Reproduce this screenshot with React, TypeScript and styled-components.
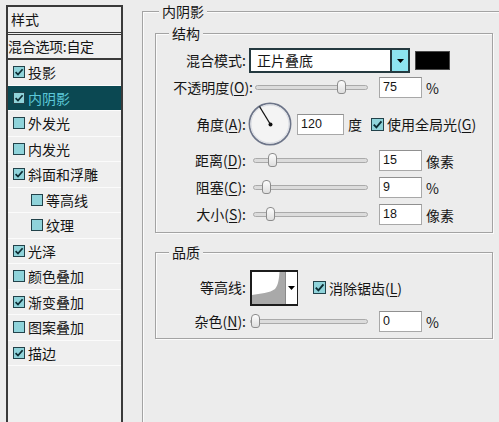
import React from "react";
import styled, { createGlobalStyle } from "styled-components";

const Global = createGlobalStyle`
  html, body { margin: 0; padding: 0; background: #ececec; overflow: hidden; }
  body {
    font-family: "Noto Sans CJK SC", "Noto Sans", sans-serif;
    font-size: 14px;
    color: #151515;
  }
  u { text-underline-offset: 2px; }
`;

const Page = styled.div`
  display: flex;
  align-items: stretch;
  width: 499px;
  height: 422px;
  overflow: hidden;
`;

const Sidebar = styled.div`
  flex: none;
  box-sizing: border-box;
  width: 117px;
  margin: 5px 0 0 6px;
  border: 2px solid #3a3a3a;
  border-bottom: none;
  background: #efefef;
  display: flex;
  flex-direction: column;
`;

const SideHeader = styled.div`
  height: 25px;
  line-height: 25px;
  padding-left: 3px;
  border-bottom: 3px double #3a3a3a;
`;

const BlendRow = styled.div`
  height: 23px;
  line-height: 23px;
  padding-left: 0;
  border-bottom: 2px solid #3a3a3a;
  white-space: nowrap;
  letter-spacing: -0.3px;
`;

const Item = styled.div<{ $indent?: boolean; $selected?: boolean }>`
  display: flex;
  align-items: center;
  gap: 3px;
  height: 24.5px;
  padding-left: ${(p) => (p.$indent ? 23 : 5)}px;
  border-bottom: 1px solid #fbfbfb;
  background: ${(p) => (p.$selected ? "#0b4852" : "transparent")};
  color: ${(p) => (p.$selected ? "#5cc8d8" : "#151515")};
  white-space: nowrap;
`;

const Box = styled.span<{ $size?: number }>`
  flex: none;
  box-sizing: border-box;
  width: ${(p) => p.$size ?? 12}px;
  height: ${(p) => p.$size ?? 12}px;
  border: 1px solid #22424a;
  background: #8fd3da;
  display: inline-flex;
  align-items: center;
  justify-content: center;
`;

const Check = ({ checked, size }: { checked?: boolean; size?: number }) => (
  <Box $size={size}>
    {checked && (
      <svg width={(size ?? 12) - 2} height={(size ?? 12) - 2} viewBox="0 0 10 10">
        <path d="M1.6 5.1 L4 7.6 L8.6 2.2" fill="none" stroke="#0b2c33" strokeWidth="1.7" />
      </svg>
    )}
  </Box>
);

const Main = styled.div`
  flex: 1;
  min-width: 0;
  margin-left: 19px;
`;

const Outer = styled.div`
  position: relative;
  box-sizing: border-box;
  width: 420px;
  height: 500px;
  margin-top: 11px;
  border-top: 1px solid #a3a3a3;
  border-left: 1px solid #a3a3a3;
  box-shadow: inset 1px 1px 0 #fbfbfb;
  padding: 21px 0 0 12px;
  display: flex;
  flex-direction: column;
`;

const Title = styled.span<{ $left: number }>`
  position: absolute;
  top: -9px;
  left: ${(p) => p.$left}px;
  padding: 0 3px;
  line-height: 17px;
  background: #ececec;
`;

const Group = styled.div<{ $gap?: number }>`
  position: relative;
  box-sizing: border-box;
  width: 338px;
  margin-top: ${(p) => p.$gap ?? 0}px;
  padding: 13px 0 4px 0;
  border: 1px solid #a3a3a3;
  box-shadow: inset 1px 1px 0 #fbfbfb, 1px 1px 0 #fbfbfb;
  display: flex;
  flex-direction: column;
`;

const Row = styled.div<{ $h: number }>`
  display: flex;
  align-items: center;
  height: ${(p) => p.$h}px;
  white-space: nowrap;
`;

const Label = styled.span<{ $w?: number }>`
  flex: none;
  width: ${(p) => p.$w ?? 90}px;
  text-align: right;
  line-height: 17px;
`;

const Select = styled.div`
  flex: none;
  display: flex;
  box-sizing: border-box;
  width: 161px;
  height: 25px;
  margin-left: 3px;
  border: 2px solid #253a40;
  background: #fff;
`;

const SelectText = styled.span`
  flex: 1;
  padding-left: 6px;
  line-height: 21px;
`;

const SelectButton = styled.span`
  flex: none;
  width: 16px;
  border-left: 2px solid #253a40;
  background: #8de4f0;
  display: flex;
  align-items: center;
  justify-content: center;
`;

const Swatch = styled.span`
  flex: none;
  box-sizing: border-box;
  width: 35px;
  height: 19px;
  margin-left: 5px;
  background: #000;
  border: 1px solid #4a4a4a;
`;

const Track = styled.div<{ $w: number; $ml: number }>`
  position: relative;
  flex: none;
  box-sizing: border-box;
  width: ${(p) => p.$w}px;
  height: 5px;
  margin-left: ${(p) => p.$ml}px;
  border: 1px solid #aaaaaa;
  border-radius: 3px;
  background: #dcdcdc;
`;

const Thumb = styled.span`
  position: absolute;
  top: -6px;
  box-sizing: border-box;
  width: 9px;
  height: 14px;
  border: 1px solid #8c8c8c;
  border-radius: 4px 4px 3px 3px;
  background: linear-gradient(#fdfdfd, #dedede);
`;

const NumBox = styled.span<{ $w?: number; $ml?: number }>`
  flex: none;
  box-sizing: border-box;
  width: ${(p) => p.$w ?? 43}px;
  height: 21px;
  margin-left: ${(p) => p.$ml ?? 11}px;
  padding-left: 3px;
  border: 1px solid #a8a8a8;
  border-top-color: #909090;
  background: #fff;
  font-family: "Liberation Sans", Arial, sans-serif;
  font-size: 12.5px;
  line-height: 19px;
`;

const Unit = styled.span<{ $ml?: number }>`
  margin-left: ${(p) => p.$ml ?? 4}px;
`;

const Dial = styled.svg`
  flex: none;
  margin-left: 2px;
`;

const CheckLabel = styled.span<{ $ml: number }>`
  display: flex;
  align-items: center;
  gap: 3px;
  margin-left: ${(p) => p.$ml}px;
`;

const Contour = styled.div`
  flex: none;
  display: flex;
  box-sizing: border-box;
  width: 48px;
  height: 36px;
  margin-left: 4px;
  border: 2px solid #1c1c1c;
  border-right-width: 1px;
  background: #fff;
`;

const ContourArrow = styled.span`
  flex: none;
  width: 11px;
  display: flex;
  align-items: center;
  justify-content: center;
  border-left: 1px solid #8a8a8a;
`;

const Tri = () => (
  <svg width="7" height="4" viewBox="0 0 7 4">
    <path d="M0 0 L7 0 L3.5 4 Z" fill="#000" />
  </svg>
);

const Slider = ({ w, ml, pos }: { w: number; ml: number; pos: number }) => (
  <Track $w={w} $ml={ml}>
    <Thumb style={{ left: pos }} />
  </Track>
);

const items = [
  { label: "投影", checked: true },
  { label: "内阴影", checked: true, selected: true },
  { label: "外发光" },
  { label: "内发光" },
  { label: "斜面和浮雕", checked: true },
  { label: "等高线", indent: true },
  { label: "纹理", indent: true },
  { label: "光泽", checked: true },
  { label: "颜色叠加" },
  { label: "渐变叠加", checked: true },
  { label: "图案叠加" },
  { label: "描边", checked: true },
];

export default function App() {
  return (
    <Page>
      <Global />
      <Sidebar>
        <SideHeader>样式</SideHeader>
        <BlendRow>混合选项:自定</BlendRow>
        {items.map((it) => (
          <Item key={it.label} $indent={it.indent} $selected={it.selected}>
            <Check checked={it.checked} />
            <span>{it.label}</span>
          </Item>
        ))}
      </Sidebar>
      <Main>
        <Outer>
          <Title $left={16}>内阴影</Title>
          <Group>
            <Title $left={13}>结构</Title>
            <Row $h={27}>
              <Label>混合模式:</Label>
              <Select>
                <SelectText>正片叠底</SelectText>
                <SelectButton>
                  <Tri />
                </SelectButton>
              </Select>
              <Swatch />
            </Row>
            <Row $h={27}>
              <Label $w={97}>
                不透明度(<u>O</u>):
              </Label>
              <Slider w={113} ml={2} pos={81} />
              <NumBox>75</NumBox>
              <Unit>%</Unit>
            </Row>
            <Row $h={46}>
              <Label>
                角度(<u>A</u>):
              </Label>
              <Dial width="44" height="44" viewBox="0 0 44 44">
                <circle cx="22" cy="22" r="20.6" fill="#f4f4f4" stroke="#6c7488" strokeWidth="1.7" />
                <circle cx="22" cy="22" r="19" fill="none" stroke="#d8dbe2" strokeWidth="1" />
                <line x1="22.5" y1="22.5" x2="11.5" y2="4.5" stroke="#111" strokeWidth="1.3" />
                <circle cx="22.5" cy="22.5" r="2" fill="#111" />
              </Dial>
              <NumBox $w={47} $ml={5}>120</NumBox>
              <Unit>度</Unit>
              <CheckLabel $ml={9}>
                <Check checked size={13} />
                <span>
                  使用全局光(<u>G</u>)
                </span>
              </CheckLabel>
            </Row>
            <Row $h={27}>
              <Label>
                距离(<u>D</u>):
              </Label>
              <Slider w={115} ml={7} pos={14} />
              <NumBox>15</NumBox>
              <Unit>像素</Unit>
            </Row>
            <Row $h={27}>
              <Label>
                阻塞(<u>C</u>):
              </Label>
              <Slider w={115} ml={7} pos={8} />
              <NumBox>9</NumBox>
              <Unit>%</Unit>
            </Row>
            <Row $h={27}>
              <Label>
                大小(<u>S</u>):
              </Label>
              <Slider w={115} ml={7} pos={12} />
              <NumBox>18</NumBox>
              <Unit>像素</Unit>
            </Row>
          </Group>
          <Group $gap={19}>
            <Title $left={13}>品质</Title>
            <Row $h={43}>
              <Label>等高线:</Label>
              <Contour>
                <svg width="33" height="32" viewBox="0 0 33 32">
                  <path
                    d="M0 32 L0 23 C8 21.5 18 21 23 17 C26.5 13 27 6 27.5 0 L33 0 L33 32 Z"
                    fill="#a9a9a9"
                  />
                </svg>
                <ContourArrow>
                  <Tri />
                </ContourArrow>
              </Contour>
              <CheckLabel $ml={15}>
                <Check checked size={13} />
                <span>
                  消除锯齿(<u>L</u>)
                </span>
              </CheckLabel>
            </Row>
            <Row $h={25}>
              <Label>
                杂色(<u>N</u>):
              </Label>
              <Slider w={118} ml={4} pos={0} />
              <NumBox>0</NumBox>
              <Unit>%</Unit>
            </Row>
          </Group>
        </Outer>
      </Main>
    </Page>
  );
}
